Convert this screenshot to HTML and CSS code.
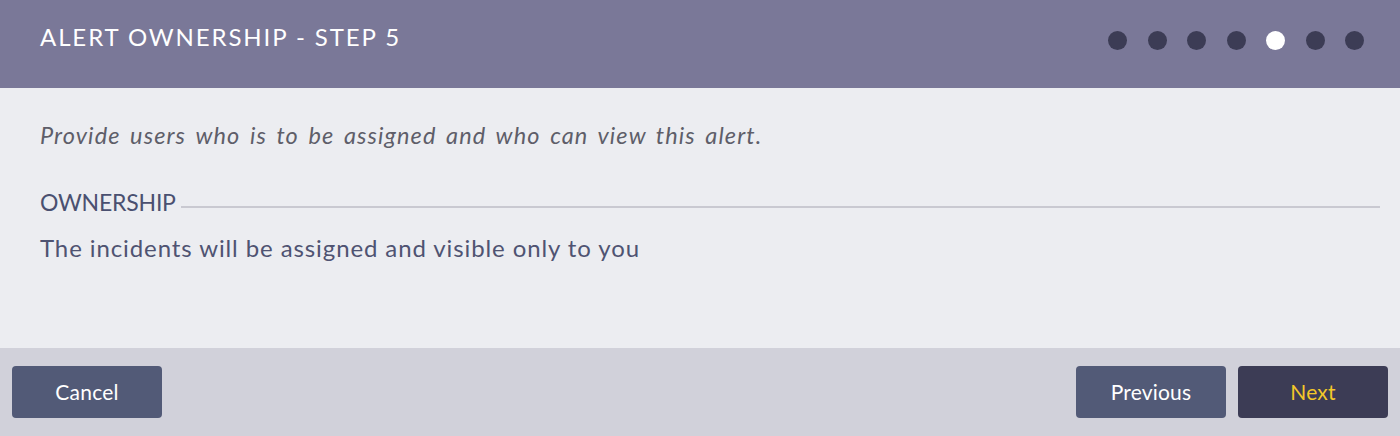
FILE: index.html
```html
<!DOCTYPE html>
<html>
<head>
<meta charset="utf-8">
<link rel="stylesheet" href="styles.css">
</head>
<body>
<div class="modal">
  <header class="head">
    <h1 class="title">ALERT OWNERSHIP - STEP 5</h1>
    <div class="dots">
      <span class="dot"></span><span class="dot"></span><span class="dot"></span><span class="dot"></span><span class="dot active"></span><span class="dot"></span><span class="dot"></span>
    </div>
  </header>
  <main class="body">
    <p class="intro">Provide users who is to be assigned and who can view this alert.</p>
    <div class="section">
      <span class="section-label">OWNERSHIP</span>
      <span class="section-rule"></span>
    </div>
    <p class="info">The incidents will be assigned and visible only to you</p>
  </main>
  <footer class="foot">
    <button class="btn">Cancel</button>
    <div class="right">
      <button class="btn">Previous</button>
      <button class="btn primary">Next</button>
    </div>
  </footer>
</div>
</body>
</html>
```
FILE: styles.css
```css
* { box-sizing: border-box; }
html, body { margin: 0; padding: 0; }
body {
  width: 1400px;
  height: 436px;
  font-family: "Lato", "Open Sans", "Liberation Sans", sans-serif;
  background: #ecedf1;
}
.modal { display: flex; flex-direction: column; height: 436px; }
.head {
  height: 88px;
  background: #7a7898;
  display: flex;
  align-items: flex-start;
  justify-content: space-between;
  padding: 25px 36px 0 40px;
}
.title {
  margin: 0;
  color: #ffffff;
  font-size: 24px;
  line-height: 24px;
  font-weight: 400;
  letter-spacing: 1.9px;
}
.dots { display: flex; gap: 20.5px; margin-top: 5.5px; }
.dot {
  width: 19px;
  height: 19px;
  border-radius: 50%;
  background: #3c3c55;
}
.dot.active { background: #ffffff; }
.body {
  flex: 1;
  background: #ecedf1;
  padding: 33px 20px 0 40px;
}
.intro {
  margin: 0;
  font-style: italic;
  font-size: 23.5px;
  line-height: 28px;
  color: #5e5e69;
  letter-spacing: 1.1px;
  word-spacing: 3px;
}
.section {
  display: flex;
  align-items: center;
  gap: 5px;
  margin-top: 39px;
}
.section-label {
  font-size: 23px;
  line-height: 28px;
  color: #4a5070;
  letter-spacing: -0.2px;
}
.section-rule {
  flex: 1;
  height: 2px;
  background: #c9c9d1;
  margin-top: 10px;
}
.info {
  margin: 18px 0 0;
  font-size: 24px;
  line-height: 28px;
  color: #4f5372;
  letter-spacing: 0.9px;
}
.foot {
  height: 88px;
  background: #d1d1da;
  display: flex;
  align-items: center;
  justify-content: space-between;
  padding: 0 12px;
}
.right { display: flex; gap: 12px; }
.btn {
  width: 150px;
  height: 52px;
  border: none;
  border-radius: 4px;
  background: #525a77;
  color: #ffffff;
  font-family: "Lato", "Open Sans", "Liberation Sans", sans-serif;
  font-size: 21px;
  letter-spacing: 0.2px;
  padding: 0 0 2px;
}
.btn.primary { background: #3c3c55; color: #f3c829; }
```
